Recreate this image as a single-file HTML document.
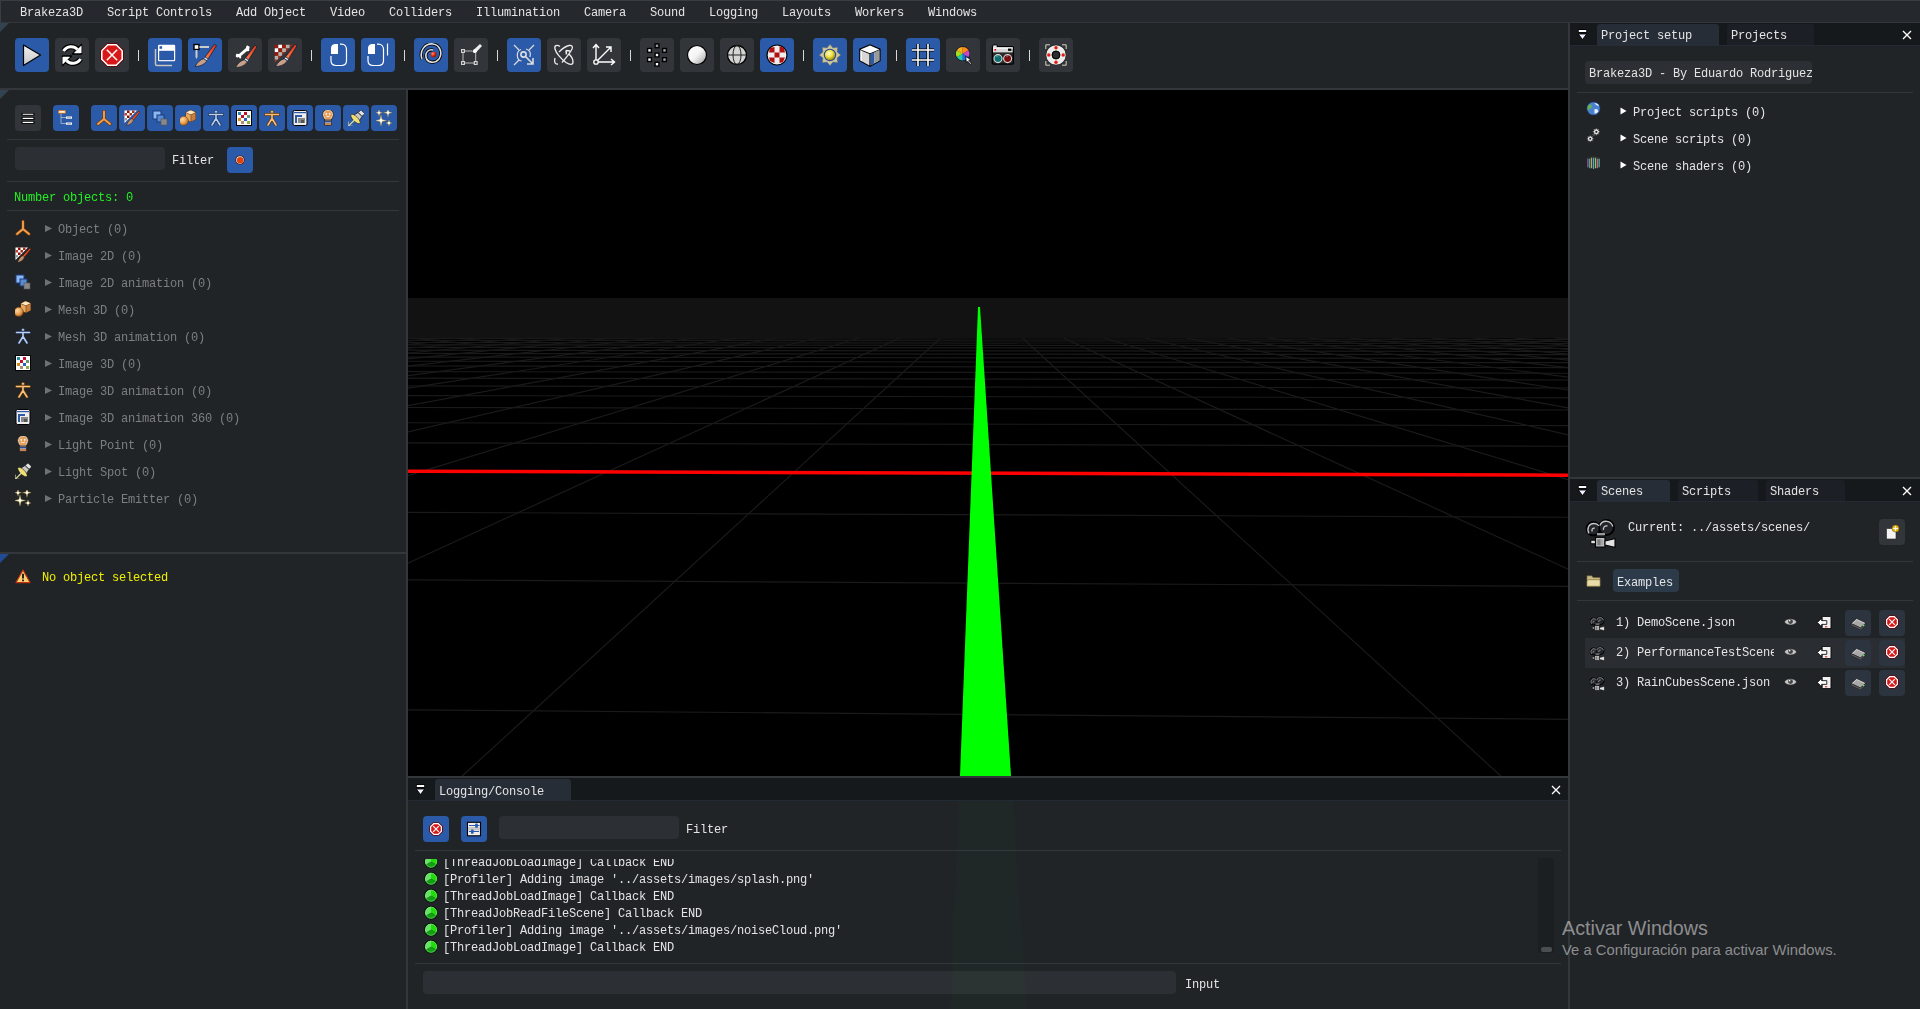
<!DOCTYPE html>
<html><head><meta charset="utf-8">
<style>
*{margin:0;padding:0;box-sizing:border-box}
html,body{width:1920px;height:1009px;overflow:hidden;background:#212427;font-family:"Liberation Mono",monospace;font-size:12px;letter-spacing:-0.2px;color:#e4e4e4}
.a{position:absolute}
.t{position:absolute;white-space:pre;line-height:14px;will-change:transform}
.btn{position:absolute;border-radius:4px}
</style></head><body>
<svg width="0" height="0" style="position:absolute"><defs>
<linearGradient id="gw" x1="0" y1="0" x2="1" y2="1"><stop offset="0" stop-color="#fff"/><stop offset="0.5" stop-color="#f4f4f4"/><stop offset="1" stop-color="#9a9a9a"/></linearGradient>
<linearGradient id="gpl" x1="0" y1="0" x2="0" y2="1"><stop offset="0" stop-color="#f0f0f0"/><stop offset="1" stop-color="#c8c8c8"/></linearGradient>
<radialGradient id="gsun" cx="0.4" cy="0.35" r="0.7"><stop offset="0" stop-color="#fffbd0"/><stop offset="0.5" stop-color="#f0e040"/><stop offset="1" stop-color="#8a7a10"/></radialGradient>
<radialGradient id="gred" cx="0.35" cy="0.35" r="0.7"><stop offset="0" stop-color="#ff9070"/><stop offset="0.6" stop-color="#e02000"/><stop offset="1" stop-color="#801000"/></radialGradient>
<radialGradient id="ggreen" cx="0.4" cy="0.35" r="0.7"><stop offset="0" stop-color="#a0ff80"/><stop offset="0.6" stop-color="#30c020"/><stop offset="1" stop-color="#107010"/></radialGradient>
<radialGradient id="gorange" cx="0.35" cy="0.35" r="0.7"><stop offset="0" stop-color="#ffd8a0"/><stop offset="0.6" stop-color="#e8a050"/><stop offset="1" stop-color="#a05a20"/></radialGradient>
<linearGradient id="gbrush" x1="0" y1="1" x2="1" y2="0"><stop offset="0" stop-color="#ff8050"/><stop offset="1" stop-color="#e03010"/></linearGradient>
</defs></svg>
<div class="a" style="left:0px;top:0px;width:1920px;height:22px;background:#25282c;"></div>
<div class="a" style="left:0px;top:0px;width:1920px;height:1px;background:#3a3d42;"></div>
<div class="a" style="left:0px;top:0px;width:1px;height:22px;background:#3a3d42;"></div>
<div class="a" style="left:0px;top:22px;width:1920px;height:1px;background:#33363a;"></div>
<div class="t" style="left:19.7px;top:6px;">Brakeza3D</div>
<div class="t" style="left:106.7px;top:6px;">Script Controls</div>
<div class="t" style="left:235.7px;top:6px;">Add Object</div>
<div class="t" style="left:329.7px;top:6px;">Video</div>
<div class="t" style="left:388.7px;top:6px;">Colliders</div>
<div class="t" style="left:475.7px;top:6px;">Illumination</div>
<div class="t" style="left:583.7px;top:6px;">Camera</div>
<div class="t" style="left:649.7px;top:6px;">Sound</div>
<div class="t" style="left:708.7px;top:6px;">Logging</div>
<div class="t" style="left:781.7px;top:6px;">Layouts</div>
<div class="t" style="left:854.7px;top:6px;">Workers</div>
<div class="t" style="left:927.7px;top:6px;">Windows</div>
<div class="a" style="left:0px;top:23px;width:1568px;height:65px;background:#212427;"></div>
<div class="a" style="left:0px;top:88px;width:1568px;height:2px;background:#33373b;"></div>
<svg class="a" style="left:0;top:23px" width="10" height="10"><path d="M0,0 L9,0 L0,9 Z" fill="#33424f"/></svg>
<div class="btn" style="left:15px;top:38px;width:34px;height:34px;background:#2a5aa8"></div>
<svg class="a" style="left:20px;top:43px" width="24" height="24" viewBox="0 0 24 24"><path d="M3.5,2 L20.5,12 L3.5,22.5 Z" fill="url(#gpl)" stroke="#000" stroke-width="1.2" stroke-linejoin="round"/></svg>
<div class="btn" style="left:55px;top:38px;width:34px;height:34px;background:#323539"></div>
<svg class="a" style="left:60px;top:43px" width="24" height="24" viewBox="0 0 24 24"><g fill="none" stroke="#000" stroke-width="5.2"><path d="M3.5,8 C7,2.5 14,2.5 17.5,6.5"/><path d="M20.5,16 C17,21.5 10,21.5 6.5,17.5"/></g><path d="M21.5,1.5 L21.5,11 L12.5,11 Z" fill="#fff" stroke="#000" stroke-width="1.4" stroke-linejoin="round"/><path d="M2.5,22.5 L2.5,13 L11.5,13 Z" fill="#fff" stroke="#000" stroke-width="1.4" stroke-linejoin="round"/><g fill="none" stroke="#fff" stroke-width="3"><path d="M3.5,8 C7,2.5 14,2.5 17.5,6.5"/><path d="M20.5,16 C17,21.5 10,21.5 6.5,17.5"/></g><path d="M21.5,2.5 L21.5,10 L14,10 Z" fill="#fff"/><path d="M2.5,21.5 L2.5,14 L10,14 Z" fill="#fff"/></svg>
<div class="btn" style="left:95px;top:38px;width:34px;height:34px;background:#323539"></div>
<svg class="a" style="left:100px;top:43px" width="24" height="24" viewBox="0 0 24 24"><polygon points="23.92,16.94 16.94,23.92 7.06,23.92 0.08,16.94 0.08,7.06 7.06,0.08 16.94,0.08 23.92,7.06" fill="#5a0a0a"/><polygon points="22.99,16.55 16.55,22.99 7.45,22.99 1.01,16.55 1.01,7.45 7.45,1.01 16.55,1.01 22.99,7.45" fill="#fff"/><polygon points="21.42,15.90 15.90,21.42 8.10,21.42 2.58,15.90 2.58,8.10 8.10,2.58 15.90,2.58 21.42,8.10" fill="#d81818"/><path d="M6.84,6.84 L17.16,17.16 M17.16,6.84 L6.84,17.16" stroke="#fff" stroke-width="1.5"/></svg>
<div class="btn" style="left:148px;top:38px;width:34px;height:34px;background:#2a5aa8"></div>
<svg class="a" style="left:153px;top:43px" width="24" height="24" viewBox="0 0 24 24"><path d="M2.5,6 L2.5,21 Q2.5,22.5 4,22.5 L19,22.5" fill="none" stroke="#c8c4b8" stroke-width="1.5"/><rect x="5" y="1.8" width="17.2" height="16.5" fill="#fff" rx="1.2"/><rect x="6.2" y="7.8" width="14.8" height="9.3" fill="#2a5aa8"/><rect x="6.5" y="3.2" width="2.6" height="2.6" fill="#2a5aa8"/></svg>
<div class="btn" style="left:188px;top:38px;width:34px;height:34px;background:#2a5aa8"></div>
<svg class="a" style="left:193px;top:43px" width="24" height="24" viewBox="0 0 24 24"><rect x="1" y="1.5" width="5" height="5" fill="#fff" stroke="#000" stroke-width="1.4"/><path d="M6.5,3 L16,3 L16,5 L6.5,5 Z" fill="#ccc"/><path d="M2.5,7 L4.5,7 L4.5,14 L3.5,16 L2.5,14 Z" fill="#ccc"/><g transform="translate(-0.5,0)"><path d="M24,2.7 L22,1.3 L12.5,14 L15.5,16 Z" fill="url(#gbrush)" stroke="#101830" stroke-width="0.7" stroke-linejoin="round"/><path d="M15.5,16 L12.5,14 L11.2,15.7 L14.4,17.9 Z" fill="#d8ecff" stroke="#101830" stroke-width="0.5"/><path d="M14.4,17.9 L11.2,15.7 C8,16.5 5,19 2.5,23.5 C6,23.5 11,22.5 14.4,17.9 Z" fill="#c8a088" stroke="#101830" stroke-width="0.7" stroke-linejoin="round"/></g></svg>
<div class="btn" style="left:228px;top:38px;width:34px;height:34px;background:#323539"></div>
<svg class="a" style="left:233px;top:43px" width="24" height="24" viewBox="0 0 24 24"><path d="M6,14 C4,15 2,14 3,12 C3,10 5,11 6,11 L13,5 C13,3 14,2 15,3 C17,3 17,5 16,6 C17,7 16,9 14,8 L8,13 C9,15 7,17 6,14 Z" fill="#fff"/><g transform="translate(0,1)"><path d="M24,2.7 L22,1.3 L12.5,14 L15.5,16 Z" fill="url(#gbrush)" stroke="#101830" stroke-width="0.7" stroke-linejoin="round"/><path d="M15.5,16 L12.5,14 L11.2,15.7 L14.4,17.9 Z" fill="#d8ecff" stroke="#101830" stroke-width="0.5"/><path d="M14.4,17.9 L11.2,15.7 C8,16.5 5,19 2.5,23.5 C6,23.5 11,22.5 14.4,17.9 Z" fill="#c8a088" stroke="#101830" stroke-width="0.7" stroke-linejoin="round"/></g></svg>
<div class="btn" style="left:268px;top:38px;width:34px;height:34px;background:#323539"></div>
<svg class="a" style="left:273px;top:43px" width="24" height="24" viewBox="0 0 24 24"><clipPath id="ckc"><path d="M1.5,1.5 L20,1.5 L1.5,20 Z"/></clipPath><g clip-path="url(#ckc)"><rect x="1.5" y="1.5" width="3.9" height="3.9" fill="#9a1a0a"/><rect x="5.3" y="1.5" width="3.9" height="3.9" fill="#ffffff"/><rect x="9.1" y="1.5" width="3.9" height="3.9" fill="#9a1a0a"/><rect x="12.9" y="1.5" width="3.9" height="3.9" fill="#b8b0a8"/><rect x="16.7" y="1.5" width="3.9" height="3.9" fill="#a03020"/><rect x="1.5" y="5.3" width="3.9" height="3.9" fill="#ffffff"/><rect x="5.3" y="5.3" width="3.9" height="3.9" fill="#9a1a0a"/><rect x="9.1" y="5.3" width="3.9" height="3.9" fill="#b8b0a8"/><rect x="12.9" y="5.3" width="3.9" height="3.9" fill="#a03020"/><rect x="16.7" y="5.3" width="3.9" height="3.9" fill="#b8b0a8"/><rect x="1.5" y="9.1" width="3.9" height="3.9" fill="#9a1a0a"/><rect x="5.3" y="9.1" width="3.9" height="3.9" fill="#b8b0a8"/><rect x="9.1" y="9.1" width="3.9" height="3.9" fill="#a03020"/><rect x="12.9" y="9.1" width="3.9" height="3.9" fill="#b8b0a8"/><rect x="16.7" y="9.1" width="3.9" height="3.9" fill="#a03020"/><rect x="1.5" y="12.9" width="3.9" height="3.9" fill="#b8b0a8"/><rect x="5.3" y="12.9" width="3.9" height="3.9" fill="#a03020"/><rect x="9.1" y="12.9" width="3.9" height="3.9" fill="#b8b0a8"/><rect x="12.9" y="12.9" width="3.9" height="3.9" fill="#a03020"/><rect x="16.7" y="12.9" width="3.9" height="3.9" fill="#b8b0a8"/><rect x="1.5" y="16.7" width="3.9" height="3.9" fill="#a03020"/><rect x="5.3" y="16.7" width="3.9" height="3.9" fill="#b8b0a8"/><rect x="9.1" y="16.7" width="3.9" height="3.9" fill="#a03020"/><rect x="12.9" y="16.7" width="3.9" height="3.9" fill="#b8b0a8"/><rect x="16.7" y="16.7" width="3.9" height="3.9" fill="#a03020"/></g><g transform="translate(0,0)"><path d="M24,2.7 L22,1.3 L12.5,14 L15.5,16 Z" fill="url(#gbrush)" stroke="#101830" stroke-width="0.7" stroke-linejoin="round"/><path d="M15.5,16 L12.5,14 L11.2,15.7 L14.4,17.9 Z" fill="#d8ecff" stroke="#101830" stroke-width="0.5"/><path d="M14.4,17.9 L11.2,15.7 C8,16.5 5,19 2.5,23.5 C6,23.5 11,22.5 14.4,17.9 Z" fill="#c8a088" stroke="#101830" stroke-width="0.7" stroke-linejoin="round"/></g></svg>
<div class="btn" style="left:321px;top:38px;width:34px;height:34px;background:#2a5aa8"></div>
<svg class="a" style="left:326px;top:43px" width="24" height="24" viewBox="0 0 24 24"><g transform="translate(0,0)"><path d="M14,1.2 L15.5,1.2 C18.5,1.2 20.5,3.5 20.5,6.5 L20.5,17.5 C20.5,20.5 18.5,22.5 15.5,22.5 L10,22.5 C7,22.5 5,20.5 5,17.5 L5,13" fill="none" stroke="#fff" stroke-width="1.2"/><path d="M5,11 L5,5 C5,2.5 7,1 9.5,1 L12,1 L12,11 Z" fill="#fff"/></g></svg>
<div class="btn" style="left:361px;top:38px;width:34px;height:34px;background:#2a5aa8"></div>
<svg class="a" style="left:366px;top:43px" width="24" height="24" viewBox="0 0 24 24"><g transform="translate(-3,0)"><path d="M14,1.2 L15.5,1.2 C18.5,1.2 20.5,3.5 20.5,6.5 L20.5,17.5 C20.5,20.5 18.5,22.5 15.5,22.5 L10,22.5 C7,22.5 5,20.5 5,17.5 L5,13" fill="none" stroke="#fff" stroke-width="1.2"/><path d="M5,11 L5,5 C5,2.5 7,1 9.5,1 L12,1 L12,11 Z" fill="#fff"/></g><path d="M21.5,0.5 L21.5,12.5" stroke="#fff" stroke-width="1.2"/></svg>
<div class="btn" style="left:414px;top:38px;width:34px;height:34px;background:#2a5aa8"></div>
<svg class="a" style="left:419px;top:43px" width="24" height="24" viewBox="0 0 24 24"><g fill="none" stroke="#000" stroke-width="3.2"><path d="M3,16 C0,8 6,0 14,1 C21,2 24,10 20,16 C16,21 8,20 7,14 C6,9 10,6 14,7"/></g><g fill="none" stroke="#ddd" stroke-width="1.6"><path d="M3,16 C0,8 6,0 14,1 C21,2 24,10 20,16 C16,21 8,20 7,14 C6,9 10,6 14,7"/></g><circle cx="14.6" cy="11.5" r="2.8" fill="url(#gred)"/></svg>
<div class="btn" style="left:454px;top:38px;width:34px;height:34px;background:#323539"></div>
<svg class="a" style="left:459px;top:43px" width="24" height="24" viewBox="0 0 24 24"><g fill="none" stroke="#ccc" stroke-width="0.9"><path d="M4,9.5 L4,18.5 M5.5,20 L15.2,20 M16.7,18.5 L16.7,10 M5.5,8 L13.5,8"/></g><g fill="none" stroke="#ddd" stroke-width="1.1"><rect x="2.6" y="6.6" width="2.8" height="2.8"/><rect x="2.6" y="18.6" width="2.8" height="2.8"/><rect x="15.3" y="18.6" width="2.8" height="2.8"/></g><path d="M14.5,7 L21,1 L23,3 L17,9.5 Z" fill="#eee"/><circle cx="15.8" cy="8.2" r="1.9" fill="#fff"/></svg>
<div class="btn" style="left:507px;top:38px;width:34px;height:34px;background:#2a5aa8"></div>
<svg class="a" style="left:512px;top:43px" width="24" height="24" viewBox="0 0 24 24"><g fill="none" stroke="#ddd" stroke-width="1.2"><path d="M2,2 L7,7 M22,2 L17,7 M2,22 L7,17"/><path d="M9.5,18 C4,17 4,8 9,6.5 M14,6 C18,7 19,10 18,14"/><circle cx="11.5" cy="11.5" r="2.6" stroke-width="1.6"/><path d="M13.5,13.5 L21,21 M21,15 L21,21 L15,21" stroke-width="1.6"/></g></svg>
<div class="btn" style="left:547px;top:38px;width:34px;height:34px;background:#323539"></div>
<svg class="a" style="left:552px;top:43px" width="24" height="24" viewBox="0 0 24 24"><g fill="none" stroke="#eee" stroke-width="1.3"><path d="M8,3.5 C5,1.5 2,2.5 3,6 C4,10 9,16 14,19.5 C18,22 21,22 21,19 C21,16 19,13 17,11"/><path d="M3,15 C2,19 3,21.5 6,21 M10,19.5 C14,15 18,10 20,6 C21,3.5 20,2 17,2.5 C14,3 10,6 7,9"/><path d="M14,7.5 L18,8 M14,7.5 L14.5,11.5" stroke-width="1.6"/></g></svg>
<div class="btn" style="left:587px;top:38px;width:34px;height:34px;background:#323539"></div>
<svg class="a" style="left:592px;top:43px" width="24" height="24" viewBox="0 0 24 24"><g fill="none" stroke="#fff" stroke-width="1.4"><path d="M4,19 L4,2 M1,5 L4,1.5 L7,5 M4,19 L22,19 M19,16 L22.5,19 L19,22 M4,19 L19,4 M14,4 L19,4 L19,9"/></g><circle cx="4" cy="19" r="2.2" fill="#333" stroke="#fff" stroke-width="1.3"/></svg>
<div class="btn" style="left:640px;top:38px;width:34px;height:34px;background:#323539"></div>
<svg class="a" style="left:645px;top:43px" width="24" height="24" viewBox="0 0 24 24"><g stroke="#000" stroke-width="1.4"><rect x="2.6" y="5.5" width="3.8" height="3.8" fill="#fff"/><rect x="2.6" y="14.7" width="3.8" height="3.8" fill="#fff"/><rect x="10.1" y="10.1" width="3.8" height="3.8" fill="#fff"/><rect x="10.1" y="19.3" width="3.8" height="3.8" fill="#fff"/><rect x="10.1" y="0.9" width="3.8" height="3.8" fill="#999"/><rect x="17.6" y="5.5" width="3.8" height="3.8" fill="#aaa"/><rect x="17.6" y="14.7" width="3.8" height="3.8" fill="#aaa"/></g></svg>
<div class="btn" style="left:680px;top:38px;width:34px;height:34px;background:#323539"></div>
<svg class="a" style="left:685px;top:43px" width="24" height="24" viewBox="0 0 24 24"><circle cx="12" cy="12" r="9.5" fill="url(#gw)" stroke="#000" stroke-width="1.2"/></svg>
<div class="btn" style="left:720px;top:38px;width:34px;height:34px;background:#323539"></div>
<svg class="a" style="left:725px;top:43px" width="24" height="24" viewBox="0 0 24 24"><circle cx="12" cy="12" r="9.5" fill="#d4d4d4" stroke="#000" stroke-width="1.3"/><g fill="none" stroke="#222" stroke-width="1"><ellipse cx="12" cy="12" rx="4" ry="9.5"/><path d="M2.5,12 L21.5,12"/></g></svg>
<div class="btn" style="left:760px;top:38px;width:34px;height:34px;background:#2a5aa8"></div>
<svg class="a" style="left:765px;top:43px" width="24" height="24" viewBox="0 0 24 24"><circle cx="12" cy="12" r="10" fill="#eee" stroke="#000" stroke-width="1.2"/><g fill="#b01010"><rect x="9.5" y="9.5" width="5" height="5"/><path d="M5,5 L9.5,4 L9.5,9.5 L4,9.5 Z"/><path d="M14.5,3 L19,5 L20,9.5 L14.5,9.5 Z"/><path d="M4,14.5 L9.5,14.5 L9.5,20 L5,18 Z"/><path d="M14.5,14.5 L20,14.5 L18,19 L14.5,20 Z"/></g></svg>
<div class="btn" style="left:813px;top:38px;width:34px;height:34px;background:#2a5aa8"></div>
<svg class="a" style="left:818px;top:43px" width="24" height="24" viewBox="0 0 24 24"><polygon points="12.00,1.40 14.91,4.98 19.50,4.50 19.02,9.09 22.60,12.00 19.02,14.91 19.50,19.50 14.91,19.02 12.00,22.60 9.09,19.02 4.50,19.50 4.98,14.91 1.40,12.00 4.98,9.09 4.50,4.50 9.09,4.98" fill="#cdc59c" stroke="#8a8260" stroke-width="0.4"/><circle cx="12" cy="12" r="6.2" fill="#1e4a90"/><circle cx="12" cy="12" r="5.2" fill="url(#gsun)"/></svg>
<div class="btn" style="left:853px;top:38px;width:34px;height:34px;background:#2a5aa8"></div>
<svg class="a" style="left:858px;top:43px" width="24" height="24" viewBox="0 0 24 24"><path d="M12,1.2 L22.6,5.8 L22.6,18 L12,24 L1.2,18 L1.2,5.8 Z" fill="#000"/><path d="M12,2.5 L21.3,6.4 L12,10.2 L2.5,6.4 Z" fill="#fff"/><path d="M2.4,7.2 L11.4,10.9 L11.4,22.4 L2.4,17.4 Z" fill="#d6d6d6"/><path d="M2.4,7.2 L4,7.9 L4,18.3 L2.4,17.4 Z" fill="#f4f4f4"/><path d="M12.6,10.9 L21.4,7.2 L21.4,17.4 L12.6,22.4 Z" fill="#c8c8c8"/><path d="M17,9.1 L21.4,7.2 L21.4,17.4 L17,19.9 Z" fill="#9a9a9a"/><path d="M12.6,10.9 L16.3,9.4 L16.3,20.3 L12.6,22.4 Z" fill="#2a5aa8"/></svg>
<div class="btn" style="left:906px;top:38px;width:34px;height:34px;background:#2a5aa8"></div>
<svg class="a" style="left:911px;top:43px" width="24" height="24" viewBox="0 0 24 24"><g stroke="#000" stroke-width="3.2"><path d="M7,1 L7,23 M17,1 L17,23 M1,7 L23,7 M1,17 L23,17"/></g><g stroke="#fff" stroke-width="1.6"><path d="M7,1 L7,23 M17,1 L17,23 M1,7 L23,7 M1,17 L23,17"/></g></svg>
<div class="btn" style="left:946px;top:38px;width:34px;height:34px;background:#323539"></div>
<svg class="a" style="left:951px;top:43px" width="24" height="24" viewBox="0 0 24 24"><circle cx="11.7" cy="10.7" r="7.4" fill="#111"/><path d="M11.7,10.7 L11.70,3.90 A6.8,6.8 0 0 1 17.59,7.30 Z" fill="#ff8a1a"/><path d="M11.7,10.7 L17.59,7.30 A6.8,6.8 0 0 1 17.59,14.10 Z" fill="#c848c8"/><path d="M11.7,10.7 L17.59,14.10 A6.8,6.8 0 0 1 11.70,17.50 Z" fill="#2a6af0"/><path d="M11.7,10.7 L11.70,17.50 A6.8,6.8 0 0 1 5.81,14.10 Z" fill="#20c8b0"/><path d="M11.7,10.7 L5.81,14.10 A6.8,6.8 0 0 1 5.81,7.30 Z" fill="#a0e020"/><path d="M11.7,10.7 L5.81,7.30 A6.8,6.8 0 0 1 11.70,3.90 Z" fill="#f8b020"/><path d="M14.5,13.5 L20,16.5 L17.8,17.3 L20.5,20.5 L19.5,21.3 L16.8,18.3 L15.5,20 Z" fill="#fff" stroke="#000" stroke-width="0.8"/></svg>
<div class="btn" style="left:986px;top:38px;width:34px;height:34px;background:#323539"></div>
<svg class="a" style="left:991px;top:43px" width="24" height="24" viewBox="0 0 24 24"><rect x="0.7" y="3" width="22.3" height="18.7" rx="1.8" fill="#000"/><rect x="1.5" y="1.6" width="5" height="3" rx="0.8" fill="#000"/><rect x="2.2" y="2.4" width="3.5" height="2" fill="#e8e8e8"/><rect x="2" y="4.3" width="19.7" height="5.2" fill="#d8d8d8"/><rect x="2" y="4.3" width="19.7" height="1.6" fill="#f4f4f4"/><rect x="3.5" y="6" width="1.6" height="1.6" fill="#e00"/><rect x="17" y="5.6" width="3.4" height="2.2" fill="#000"/><rect x="2" y="10" width="19.7" height="10.5" fill="#2a2a2a"/><circle cx="7" cy="15.6" r="4" fill="#0c6c70" stroke="#d8d8d8" stroke-width="1.1"/><circle cx="16.6" cy="15.6" r="4" fill="#7a0c10" stroke="#d8d8d8" stroke-width="1.1"/><path d="M5,14 L7.5,13 M15,14 L17,13" stroke="#8ef" stroke-width="0.6" opacity="0.6"/></svg>
<div class="btn" style="left:1039px;top:38px;width:34px;height:34px;background:#323539"></div>
<svg class="a" style="left:1044px;top:43px" width="24" height="24" viewBox="0 0 24 24"><g fill="none" stroke="#d8d0c0" stroke-width="1"><path d="M1.8,6 L1.8,1.8 L6,1.8 M18,1.8 L22.2,1.8 L22.2,6 M22.2,18 L22.2,22.2 L18,22.2 M6,22.2 L1.8,22.2 L1.8,18"/></g><circle cx="12" cy="12" r="10.2" fill="#000"/><circle cx="12" cy="12" r="7" fill="none" stroke="#ececec" stroke-width="5.6"/><circle cx="12" cy="12" r="3.9" fill="#2a2d31" stroke="#000" stroke-width="1"/><g fill="#e81818"><circle cx="12" cy="4.8" r="1.7"/><circle cx="12" cy="19.2" r="1.7"/><circle cx="4.8" cy="12" r="1.7"/><circle cx="19.2" cy="12" r="1.7"/></g></svg>
<div class="a" style="left:138px;top:50px;width:1px;height:11px;background:#d8d8d8;"></div>
<div class="a" style="left:311px;top:50px;width:1px;height:11px;background:#d8d8d8;"></div>
<div class="a" style="left:404px;top:50px;width:1px;height:11px;background:#d8d8d8;"></div>
<div class="a" style="left:497px;top:50px;width:1px;height:11px;background:#d8d8d8;"></div>
<div class="a" style="left:630px;top:50px;width:1px;height:11px;background:#d8d8d8;"></div>
<div class="a" style="left:803px;top:50px;width:1px;height:11px;background:#d8d8d8;"></div>
<div class="a" style="left:896px;top:50px;width:1px;height:11px;background:#d8d8d8;"></div>
<div class="a" style="left:1029px;top:50px;width:1px;height:11px;background:#d8d8d8;"></div>
<div class="a" style="left:406px;top:90px;width:2px;height:919px;background:#33373b;"></div>
<svg class="a" style="left:0;top:90px" width="10" height="10"><path d="M0,0 L9,0 L0,9 Z" fill="#33424f"/></svg>
<div class="btn" style="left:15px;top:105px;width:26px;height:26px;background:#323539"></div>
<svg class="a" style="left:20px;top:110px" width="16" height="16" viewBox="0 0 16 16"><g stroke="#000" stroke-width="2.6" stroke-linecap="round"><path d="M2.5,4.3 L13.5,4.3 M2.5,8.4 L13.5,8.4 M2.5,12.4 L13.5,12.4"/></g><g stroke="#fff" stroke-width="1.1"><path d="M2.6,4.3 L13.4,4.3 M2.6,8.4 L13.4,8.4 M2.6,12.4 L13.4,12.4"/></g></svg>
<div class="btn" style="left:53px;top:105px;width:26px;height:26px;background:#2a5aa8"></div>
<svg class="a" style="left:58px;top:110px" width="16" height="16" viewBox="0 0 16 16"><g stroke="#ccc" stroke-width="0.7" fill="none"><path d="M3,3.3 L3,13.5 L8,13.5 M3,7.5 L8,7.5"/></g><rect x="0.3" y="0.3" width="7.3" height="3" fill="#f8d090" stroke="#c06010" stroke-width="0.6"/><rect x="1.5" y="1.3" width="5" height="1" fill="#fff"/><rect x="8" y="6.5" width="6" height="2.2" fill="#fff"/><rect x="8" y="12.5" width="6" height="2.2" fill="#fff"/><path d="M9,7.6 L13,7.6 M9,13.6 L13,13.6" stroke="#667" stroke-width="0.5"/></svg>
<div class="btn" style="left:91px;top:105px;width:26px;height:26px;background:#2a5aa8"></div>
<svg class="a" style="left:96px;top:110px" width="16" height="16" viewBox="0 0 16 16"><g stroke="#7a3a00" stroke-width="3.2" stroke-linecap="round" fill="none"><path d="M8,1.5 L8,9 L2,14 M8,9 L14,14"/></g><g stroke="#f0a050" stroke-width="1.9" stroke-linecap="round" fill="none"><path d="M8,1.5 L8,9 L2,14 M8,9 L14,14"/></g></svg>
<div class="btn" style="left:119px;top:105px;width:26px;height:26px;background:#2a5aa8"></div>
<svg class="a" style="left:124px;top:110px" width="16" height="16" viewBox="0 0 16 16"><path d="M0.5,0.5 L13,0.5 L0.5,13 Z" fill="#fff"/><rect x="3" y="0.5" width="2.5" height="2.5" fill="#901000"/><rect x="8" y="0.5" width="2.5" height="2.5" fill="#a03020"/><rect x="0.5" y="3" width="2.5" height="2.5" fill="#c04030"/><rect x="5.5" y="3" width="2.5" height="2.5" fill="#a03020"/><rect x="3" y="5.5" width="2.5" height="2.5" fill="#901000"/><rect x="0.5" y="8" width="2.5" height="2.5" fill="#999"/><path d="M15,1 L16,2 L9.5,10 L8,8.5 Z" fill="#f05020" stroke="#300" stroke-width="0.4"/><path d="M8,8.5 L9.5,10 C8.5,13 6,15 2.5,15.5 C3.5,13 5,9.5 8,8.5 Z" fill="#c09070" stroke="#201000" stroke-width="0.4"/></svg>
<div class="btn" style="left:147px;top:105px;width:26px;height:26px;background:#2a5aa8"></div>
<svg class="a" style="left:152px;top:110px" width="16" height="16" viewBox="0 0 16 16"><rect x="1" y="1" width="8" height="8" fill="#8ab8f0" stroke="#1a3a80" stroke-width="1"/><rect x="5" y="5" width="7" height="7" fill="#5a8ad0" stroke="#1a3a80" stroke-width="1"/><rect x="9" y="9" width="6" height="6" fill="#888" stroke="#555" stroke-width="0.6"/></svg>
<div class="btn" style="left:175px;top:105px;width:26px;height:26px;background:#2a5aa8"></div>
<svg class="a" style="left:180px;top:110px" width="16" height="16" viewBox="0 0 16 16"><path d="M5.5,2.5 L10.5,-0.3 L16,2 L16,9.5 L11,12 L5.5,10 Z" fill="#6a3a10"/><path d="M6,2.6 L10.5,0.3 L15.5,2.3 L11,4.6 Z" fill="#ffe8c0"/><path d="M6,3 L10.7,5 L10.7,11.5 L6,9.6 Z" fill="#e8a860"/><path d="M11.3,5 L15.5,2.8 L15.5,9.3 L11.3,11.5 Z" fill="#c88040"/><circle cx="3.8" cy="10.9" r="4.6" fill="url(#gorange)" stroke="#6a3a10" stroke-width="0.5"/></svg>
<div class="btn" style="left:203px;top:105px;width:26px;height:26px;background:#2a5aa8"></div>
<svg class="a" style="left:208px;top:110px" width="16" height="16" viewBox="0 0 16 16"><g stroke="#1a2a50" stroke-width="3" stroke-linecap="round" fill="none"><path d="M1.5,4.5 L14.5,4.5 M8,4.5 L8,8.5 L4,15 M8,8.5 L12,15"/></g><circle cx="8" cy="1.8" r="1.5" fill="#b8d0f0" stroke="#1a2a50" stroke-width="0.6"/><g stroke="#b8d0f0" stroke-width="1.6" stroke-linecap="round" fill="none"><path d="M1.5,4.5 L14.5,4.5 M8,4.5 L8,8.5 L4,15 M8,8.5 L12,15"/></g></svg>
<div class="btn" style="left:231px;top:105px;width:26px;height:26px;background:#2a5aa8"></div>
<svg class="a" style="left:236px;top:110px" width="16" height="16" viewBox="0 0 16 16"><rect x="0.5" y="0.5" width="15" height="15" fill="#fff" stroke="#000" stroke-width="1"/><rect x="2" y="2" width="3" height="3" fill="#2a8aa8"/><rect x="8" y="2" width="3" height="3" fill="#c01030"/><rect x="5" y="5" width="3" height="3" fill="#c01030"/><rect x="11" y="5" width="3" height="3" fill="#6a9a6a"/><rect x="2" y="8" width="3" height="3" fill="#d88a20"/><rect x="8" y="8" width="3" height="3" fill="#2a60c0"/><rect x="5" y="11" width="3" height="3" fill="#b09070"/><rect x="11" y="11" width="3" height="3" fill="#8ab040"/></svg>
<div class="btn" style="left:259px;top:105px;width:26px;height:26px;background:#2a5aa8"></div>
<svg class="a" style="left:264px;top:110px" width="16" height="16" viewBox="0 0 16 16"><g stroke="#5a3000" stroke-width="3" stroke-linecap="round" fill="none"><path d="M1.5,4.5 L14.5,4.5 M8,4.5 L8,8.5 L4,15 M8,8.5 L12,15"/></g><circle cx="8" cy="1.8" r="1.5" fill="#f8c080" stroke="#5a3000" stroke-width="0.6"/><g stroke="#f8c080" stroke-width="1.6" stroke-linecap="round" fill="none"><path d="M1.5,4.5 L14.5,4.5 M8,4.5 L8,8.5 L4,15 M8,8.5 L12,15"/></g></svg>
<div class="btn" style="left:287px;top:105px;width:26px;height:26px;background:#2a5aa8"></div>
<svg class="a" style="left:292px;top:110px" width="16" height="16" viewBox="0 0 16 16"><rect x="1" y="0.5" width="14" height="15" rx="1.5" fill="#eee" stroke="#000" stroke-width="1"/><rect x="2" y="2" width="12" height="1.2" fill="#2a5aa8"/><path d="M3,5 L10,5 L10,7 L5,7 L5,13 L3,13 Z" fill="#2a5aa8"/><rect x="6" y="8" width="7" height="5" fill="#888"/><rect x="9" y="10" width="3" height="3" fill="#555"/></svg>
<div class="btn" style="left:315px;top:105px;width:26px;height:26px;background:#2a5aa8"></div>
<svg class="a" style="left:320px;top:110px" width="16" height="16" viewBox="0 0 16 16"><path d="M8,-0.6 C4.6,-0.6 2.6,1.8 2.6,4.6 C2.6,7 4.2,8.2 4.8,10 L11.2,10 C11.8,8.2 13.4,7 13.4,4.6 C13.4,1.8 11.4,-0.6 8,-0.6 Z" fill="#e8dccc" stroke="#3a2410" stroke-width="0.9"/><path d="M8,0.6 C5.5,0.6 4,2.5 4,4.6 C4,6.5 5.2,7.6 5.8,9.2 L10.2,9.2 C10.8,7.6 12,6.5 12,4.6 C12,2.5 10.5,0.6 8,0.6 Z" fill="#e89040" opacity="0.85"/><circle cx="6.3" cy="3.8" r="0.9" fill="#fff"/><circle cx="9.7" cy="3.8" r="0.9" fill="#fff"/><path d="M6,5.8 C7,7 9,7 10,5.8" fill="none" stroke="#fff" stroke-width="0.8"/><rect x="4.6" y="10.2" width="6.8" height="5" fill="#d8d8e0" stroke="#2a1a10" stroke-width="0.7"/><rect x="5" y="11" width="6" height="1.4" fill="#2a4a90"/><rect x="5" y="13.2" width="6" height="1.4" fill="#c06a20"/><path d="M6.5,15.4 L9.5,15.4 L8,16.6 Z" fill="#3a2410"/></svg>
<div class="btn" style="left:343px;top:105px;width:26px;height:26px;background:#2a5aa8"></div>
<svg class="a" style="left:348px;top:110px" width="16" height="16" viewBox="0 0 16 16"><path d="M10,2.5 L13,-0.2 L16.8,3.6 L14,6.5 Z" fill="#e0e0e0" stroke="#111" stroke-width="0.8" stroke-linejoin="round"/><path d="M4.5,6 L10,2.5 L14,6.5 L10.5,12 Z" fill="#c8c8c8" stroke="#111" stroke-width="0.7"/><ellipse cx="7.5" cy="9" rx="6.2" ry="2.4" transform="rotate(45 7.5 9)" fill="#f0e070" stroke="#222" stroke-width="0.6"/><path d="M7.5,9 L0.5,16" stroke="#e8e0a0" stroke-width="1.1"/><path d="M0,11.5 L0,16.3 L4.8,16.3" fill="none" stroke="#e8e0a0" stroke-width="1.1"/></svg>
<div class="btn" style="left:371px;top:105px;width:26px;height:26px;background:#2a5aa8"></div>
<svg class="a" style="left:376px;top:110px" width="16" height="16" viewBox="0 0 16 16"><path d="M3,-0.8999999999999999 L3.8,1.9000000000000001 L6.6,2.7 L3.8,3.5 L3,6.300000000000001 L2.2,3.5 L-0.6000000000000001,2.7 L2.2,1.9000000000000001 Z" fill="#f8f0c0" stroke="#8a7030" stroke-width="0.35"/><circle cx="3" cy="2.7" r="1.04" fill="#fff"/><path d="M12,-1.8999999999999995 L12.9,1.8000000000000003 L16.6,2.7 L12.9,3.6 L12,7.3 L11.1,3.6 L7.4,2.7 L11.1,1.8000000000000003 Z" fill="#f8f0c0" stroke="#8a7030" stroke-width="0.35"/><circle cx="12" cy="2.7" r="1.17" fill="#fff"/><path d="M5,4.7 L6.1,9.4 L10.8,10.5 L6.1,11.6 L5,16.3 L3.9,11.6 L-0.7999999999999998,10.5 L3.9,9.4 Z" fill="#f8f0c0" stroke="#8a7030" stroke-width="0.35"/><circle cx="5" cy="10.5" r="1.43" fill="#fff"/><path d="M13,9.8 L13.8,12.2 L16.2,13 L13.8,13.8 L13,16.2 L12.2,13.8 L9.8,13 L12.2,12.2 Z" fill="#f8f0c0" stroke="#8a7030" stroke-width="0.35"/><circle cx="13" cy="13" r="1.04" fill="#fff"/></svg>
<div class="a" style="left:7px;top:139px;width:392px;height:1px;background:#33363b;"></div>
<div class="btn" style="left:15px;top:147px;width:150px;height:23px;background:#2c2f33"></div>
<div class="t" style="left:172.2px;top:154px;">Filter</div>
<div class="btn" style="left:227px;top:147px;width:26px;height:26px;background:#2a5aa8"></div>
<svg class="a" style="left:232px;top:152px" width="16" height="16" viewBox="0 0 16 16"><circle cx="8" cy="8" r="4.6" fill="#4a1200"/><circle cx="8" cy="8" r="3.8" fill="#fff"/><circle cx="8.2" cy="8.2" r="3.3" fill="#e0400e"/></svg>
<div class="a" style="left:7px;top:181px;width:392px;height:1px;background:#33363b;"></div>
<div class="t" style="left:14.2px;top:191px;color:#22f022;">Number objects: 0</div>
<div class="a" style="left:7px;top:210px;width:392px;height:1px;background:#33363b;"></div>
<svg class="a" style="left:15px;top:220px" width="16" height="16" viewBox="0 0 16 16"><g stroke="#7a3a00" stroke-width="3.2" stroke-linecap="round" fill="none"><path d="M8,1.5 L8,9 L2,14 M8,9 L14,14"/></g><g stroke="#f0a050" stroke-width="1.9" stroke-linecap="round" fill="none"><path d="M8,1.5 L8,9 L2,14 M8,9 L14,14"/></g></svg>
<svg class="a" style="left:45px;top:225px" width="8" height="8"><path d="M0,0 L7,3.5 L0,7 Z" fill="#6f7275"/></svg>
<div class="t" style="left:58.2px;top:223px;color:#7c7f82;">Object (0)</div>
<svg class="a" style="left:15px;top:247px" width="16" height="16" viewBox="0 0 16 16"><path d="M0.5,0.5 L13,0.5 L0.5,13 Z" fill="#fff"/><rect x="3" y="0.5" width="2.5" height="2.5" fill="#901000"/><rect x="8" y="0.5" width="2.5" height="2.5" fill="#a03020"/><rect x="0.5" y="3" width="2.5" height="2.5" fill="#c04030"/><rect x="5.5" y="3" width="2.5" height="2.5" fill="#a03020"/><rect x="3" y="5.5" width="2.5" height="2.5" fill="#901000"/><rect x="0.5" y="8" width="2.5" height="2.5" fill="#999"/><path d="M15,1 L16,2 L9.5,10 L8,8.5 Z" fill="#f05020" stroke="#300" stroke-width="0.4"/><path d="M8,8.5 L9.5,10 C8.5,13 6,15 2.5,15.5 C3.5,13 5,9.5 8,8.5 Z" fill="#c09070" stroke="#201000" stroke-width="0.4"/></svg>
<svg class="a" style="left:45px;top:252px" width="8" height="8"><path d="M0,0 L7,3.5 L0,7 Z" fill="#6f7275"/></svg>
<div class="t" style="left:58.2px;top:250px;color:#7c7f82;">Image 2D (0)</div>
<svg class="a" style="left:15px;top:274px" width="16" height="16" viewBox="0 0 16 16"><rect x="1" y="1" width="8" height="8" fill="#8ab8f0" stroke="#1a3a80" stroke-width="1"/><rect x="5" y="5" width="7" height="7" fill="#5a8ad0" stroke="#1a3a80" stroke-width="1"/><rect x="9" y="9" width="6" height="6" fill="#888" stroke="#555" stroke-width="0.6"/></svg>
<svg class="a" style="left:45px;top:279px" width="8" height="8"><path d="M0,0 L7,3.5 L0,7 Z" fill="#6f7275"/></svg>
<div class="t" style="left:58.2px;top:277px;color:#7c7f82;">Image 2D animation (0)</div>
<svg class="a" style="left:15px;top:301px" width="16" height="16" viewBox="0 0 16 16"><path d="M5.5,2.5 L10.5,-0.3 L16,2 L16,9.5 L11,12 L5.5,10 Z" fill="#6a3a10"/><path d="M6,2.6 L10.5,0.3 L15.5,2.3 L11,4.6 Z" fill="#ffe8c0"/><path d="M6,3 L10.7,5 L10.7,11.5 L6,9.6 Z" fill="#e8a860"/><path d="M11.3,5 L15.5,2.8 L15.5,9.3 L11.3,11.5 Z" fill="#c88040"/><circle cx="3.8" cy="10.9" r="4.6" fill="url(#gorange)" stroke="#6a3a10" stroke-width="0.5"/></svg>
<svg class="a" style="left:45px;top:306px" width="8" height="8"><path d="M0,0 L7,3.5 L0,7 Z" fill="#6f7275"/></svg>
<div class="t" style="left:58.2px;top:304px;color:#7c7f82;">Mesh 3D (0)</div>
<svg class="a" style="left:15px;top:328px" width="16" height="16" viewBox="0 0 16 16"><g stroke="#1a2a50" stroke-width="3" stroke-linecap="round" fill="none"><path d="M1.5,4.5 L14.5,4.5 M8,4.5 L8,8.5 L4,15 M8,8.5 L12,15"/></g><circle cx="8" cy="1.8" r="1.5" fill="#b8d0f0" stroke="#1a2a50" stroke-width="0.6"/><g stroke="#b8d0f0" stroke-width="1.6" stroke-linecap="round" fill="none"><path d="M1.5,4.5 L14.5,4.5 M8,4.5 L8,8.5 L4,15 M8,8.5 L12,15"/></g></svg>
<svg class="a" style="left:45px;top:333px" width="8" height="8"><path d="M0,0 L7,3.5 L0,7 Z" fill="#6f7275"/></svg>
<div class="t" style="left:58.2px;top:331px;color:#7c7f82;">Mesh 3D animation (0)</div>
<svg class="a" style="left:15px;top:355px" width="16" height="16" viewBox="0 0 16 16"><rect x="0.5" y="0.5" width="15" height="15" fill="#fff" stroke="#000" stroke-width="1"/><rect x="2" y="2" width="3" height="3" fill="#2a8aa8"/><rect x="8" y="2" width="3" height="3" fill="#c01030"/><rect x="5" y="5" width="3" height="3" fill="#c01030"/><rect x="11" y="5" width="3" height="3" fill="#6a9a6a"/><rect x="2" y="8" width="3" height="3" fill="#d88a20"/><rect x="8" y="8" width="3" height="3" fill="#2a60c0"/><rect x="5" y="11" width="3" height="3" fill="#b09070"/><rect x="11" y="11" width="3" height="3" fill="#8ab040"/></svg>
<svg class="a" style="left:45px;top:360px" width="8" height="8"><path d="M0,0 L7,3.5 L0,7 Z" fill="#6f7275"/></svg>
<div class="t" style="left:58.2px;top:358px;color:#7c7f82;">Image 3D (0)</div>
<svg class="a" style="left:15px;top:382px" width="16" height="16" viewBox="0 0 16 16"><g stroke="#5a3000" stroke-width="3" stroke-linecap="round" fill="none"><path d="M1.5,4.5 L14.5,4.5 M8,4.5 L8,8.5 L4,15 M8,8.5 L12,15"/></g><circle cx="8" cy="1.8" r="1.5" fill="#f8c080" stroke="#5a3000" stroke-width="0.6"/><g stroke="#f8c080" stroke-width="1.6" stroke-linecap="round" fill="none"><path d="M1.5,4.5 L14.5,4.5 M8,4.5 L8,8.5 L4,15 M8,8.5 L12,15"/></g></svg>
<svg class="a" style="left:45px;top:387px" width="8" height="8"><path d="M0,0 L7,3.5 L0,7 Z" fill="#6f7275"/></svg>
<div class="t" style="left:58.2px;top:385px;color:#7c7f82;">Image 3D animation (0)</div>
<svg class="a" style="left:15px;top:409px" width="16" height="16" viewBox="0 0 16 16"><rect x="1" y="0.5" width="14" height="15" rx="1.5" fill="#eee" stroke="#000" stroke-width="1"/><rect x="2" y="2" width="12" height="1.2" fill="#2a5aa8"/><path d="M3,5 L10,5 L10,7 L5,7 L5,13 L3,13 Z" fill="#2a5aa8"/><rect x="6" y="8" width="7" height="5" fill="#888"/><rect x="9" y="10" width="3" height="3" fill="#555"/></svg>
<svg class="a" style="left:45px;top:414px" width="8" height="8"><path d="M0,0 L7,3.5 L0,7 Z" fill="#6f7275"/></svg>
<div class="t" style="left:58.2px;top:412px;color:#7c7f82;">Image 3D animation 360 (0)</div>
<svg class="a" style="left:15px;top:436px" width="16" height="16" viewBox="0 0 16 16"><path d="M8,-0.6 C4.6,-0.6 2.6,1.8 2.6,4.6 C2.6,7 4.2,8.2 4.8,10 L11.2,10 C11.8,8.2 13.4,7 13.4,4.6 C13.4,1.8 11.4,-0.6 8,-0.6 Z" fill="#e8dccc" stroke="#3a2410" stroke-width="0.9"/><path d="M8,0.6 C5.5,0.6 4,2.5 4,4.6 C4,6.5 5.2,7.6 5.8,9.2 L10.2,9.2 C10.8,7.6 12,6.5 12,4.6 C12,2.5 10.5,0.6 8,0.6 Z" fill="#e89040" opacity="0.85"/><circle cx="6.3" cy="3.8" r="0.9" fill="#fff"/><circle cx="9.7" cy="3.8" r="0.9" fill="#fff"/><path d="M6,5.8 C7,7 9,7 10,5.8" fill="none" stroke="#fff" stroke-width="0.8"/><rect x="4.6" y="10.2" width="6.8" height="5" fill="#d8d8e0" stroke="#2a1a10" stroke-width="0.7"/><rect x="5" y="11" width="6" height="1.4" fill="#2a4a90"/><rect x="5" y="13.2" width="6" height="1.4" fill="#c06a20"/><path d="M6.5,15.4 L9.5,15.4 L8,16.6 Z" fill="#3a2410"/></svg>
<svg class="a" style="left:45px;top:441px" width="8" height="8"><path d="M0,0 L7,3.5 L0,7 Z" fill="#6f7275"/></svg>
<div class="t" style="left:58.2px;top:439px;color:#7c7f82;">Light Point (0)</div>
<svg class="a" style="left:15px;top:463px" width="16" height="16" viewBox="0 0 16 16"><path d="M10,2.5 L13,-0.2 L16.8,3.6 L14,6.5 Z" fill="#e0e0e0" stroke="#111" stroke-width="0.8" stroke-linejoin="round"/><path d="M4.5,6 L10,2.5 L14,6.5 L10.5,12 Z" fill="#c8c8c8" stroke="#111" stroke-width="0.7"/><ellipse cx="7.5" cy="9" rx="6.2" ry="2.4" transform="rotate(45 7.5 9)" fill="#f0e070" stroke="#222" stroke-width="0.6"/><path d="M7.5,9 L0.5,16" stroke="#e8e0a0" stroke-width="1.1"/><path d="M0,11.5 L0,16.3 L4.8,16.3" fill="none" stroke="#e8e0a0" stroke-width="1.1"/></svg>
<svg class="a" style="left:45px;top:468px" width="8" height="8"><path d="M0,0 L7,3.5 L0,7 Z" fill="#6f7275"/></svg>
<div class="t" style="left:58.2px;top:466px;color:#7c7f82;">Light Spot (0)</div>
<svg class="a" style="left:15px;top:490px" width="16" height="16" viewBox="0 0 16 16"><path d="M3,-0.8999999999999999 L3.8,1.9000000000000001 L6.6,2.7 L3.8,3.5 L3,6.300000000000001 L2.2,3.5 L-0.6000000000000001,2.7 L2.2,1.9000000000000001 Z" fill="#f8f0c0" stroke="#8a7030" stroke-width="0.35"/><circle cx="3" cy="2.7" r="1.04" fill="#fff"/><path d="M12,-1.8999999999999995 L12.9,1.8000000000000003 L16.6,2.7 L12.9,3.6 L12,7.3 L11.1,3.6 L7.4,2.7 L11.1,1.8000000000000003 Z" fill="#f8f0c0" stroke="#8a7030" stroke-width="0.35"/><circle cx="12" cy="2.7" r="1.17" fill="#fff"/><path d="M5,4.7 L6.1,9.4 L10.8,10.5 L6.1,11.6 L5,16.3 L3.9,11.6 L-0.7999999999999998,10.5 L3.9,9.4 Z" fill="#f8f0c0" stroke="#8a7030" stroke-width="0.35"/><circle cx="5" cy="10.5" r="1.43" fill="#fff"/><path d="M13,9.8 L13.8,12.2 L16.2,13 L13.8,13.8 L13,16.2 L12.2,13.8 L9.8,13 L12.2,12.2 Z" fill="#f8f0c0" stroke="#8a7030" stroke-width="0.35"/><circle cx="13" cy="13" r="1.04" fill="#fff"/></svg>
<svg class="a" style="left:45px;top:495px" width="8" height="8"><path d="M0,0 L7,3.5 L0,7 Z" fill="#6f7275"/></svg>
<div class="t" style="left:58.2px;top:493px;color:#7c7f82;">Particle Emitter (0)</div>
<div class="a" style="left:0px;top:552px;width:406px;height:2px;background:#33373b;"></div>
<svg class="a" style="left:0;top:554px" width="10" height="10"><path d="M0,0 L9,0 L0,9 Z" fill="#214b95"/></svg>
<svg class="a" style="left:15px;top:569px" width="16" height="15" viewBox="0 0 16 16"><path d="M8,1 L15.5,14.5 L0.5,14.5 Z" fill="#f8d070" stroke="#c03010" stroke-width="1.2" stroke-linejoin="round"/><path d="M8,5 L8,10" stroke="#000" stroke-width="1.8"/><rect x="7.1" y="11.3" width="1.8" height="1.8" fill="#000"/></svg>
<div class="t" style="left:42.2px;top:571px;color:#f0f000;">No object selected</div>
<div class="a" style="left:408px;top:90px;width:1160px;height:686px;background:#000;overflow:hidden">
<svg width="1160" height="686" style="position:absolute;left:0;top:0">
<rect x="0" y="208" width="1160" height="40" fill="#121212"/>
<g stroke="#1a1a1a" stroke-width="1.2" fill="none"><line x1="0" y1="619.82" x2="1160" y2="629.29"/>
<line x1="0" y1="489.90" x2="1160" y2="496.38"/>
<line x1="0" y1="422.32" x2="1160" y2="427.25"/>
<line x1="0" y1="352.91" x2="1160" y2="356.24"/>
<line x1="0" y1="332.73" x2="1160" y2="335.59"/>
<line x1="0" y1="317.49" x2="1160" y2="320.00"/>
<line x1="0" y1="305.57" x2="1160" y2="307.81"/>
<line x1="0" y1="296.00" x2="1160" y2="298.02"/>
<line x1="0" y1="288.14" x2="1160" y2="289.98"/>
<line x1="0" y1="281.58" x2="1160" y2="283.27"/>
<line x1="0" y1="276.01" x2="1160" y2="277.57"/>
<line x1="0" y1="271.23" x2="1160" y2="272.68"/>
<line x1="0" y1="267.07" x2="1160" y2="268.43"/>
<line x1="0" y1="263.44" x2="1160" y2="264.71"/>
<line x1="0" y1="260.22" x2="1160" y2="261.42"/>
<line x1="0" y1="257.36" x2="1160" y2="258.49"/>
<line x1="0" y1="254.80" x2="1160" y2="255.87"/>
<line x1="0" y1="252.49" x2="1160" y2="253.51"/>
<line x1="0" y1="250.40" x2="1160" y2="251.37"/>
<line x1="0" y1="248.50" x2="1160" y2="249.43"/>
<line x1="-1064.50" y1="248.00" x2="-20196.34" y2="686.00"/>
<line x1="-1023.55" y1="248.00" x2="-19677.09" y2="686.00"/>
<line x1="-982.60" y1="248.00" x2="-19157.85" y2="686.00"/>
<line x1="-941.65" y1="248.00" x2="-18638.60" y2="686.00"/>
<line x1="-900.70" y1="248.00" x2="-18119.36" y2="686.00"/>
<line x1="-859.75" y1="248.00" x2="-17600.11" y2="686.00"/>
<line x1="-818.80" y1="248.00" x2="-17080.86" y2="686.00"/>
<line x1="-777.85" y1="248.00" x2="-16561.62" y2="686.00"/>
<line x1="-736.90" y1="248.00" x2="-16042.37" y2="686.00"/>
<line x1="-695.95" y1="248.00" x2="-15523.13" y2="686.00"/>
<line x1="-655.00" y1="248.00" x2="-15003.88" y2="686.00"/>
<line x1="-614.05" y1="248.00" x2="-14484.63" y2="686.00"/>
<line x1="-573.10" y1="248.00" x2="-13965.39" y2="686.00"/>
<line x1="-532.15" y1="248.00" x2="-13446.14" y2="686.00"/>
<line x1="-491.20" y1="248.00" x2="-12926.90" y2="686.00"/>
<line x1="-450.25" y1="248.00" x2="-12407.65" y2="686.00"/>
<line x1="-409.30" y1="248.00" x2="-11888.40" y2="686.00"/>
<line x1="-368.35" y1="248.00" x2="-11369.16" y2="686.00"/>
<line x1="-327.40" y1="248.00" x2="-10849.91" y2="686.00"/>
<line x1="-286.45" y1="248.00" x2="-10330.67" y2="686.00"/>
<line x1="-245.50" y1="248.00" x2="-9811.42" y2="686.00"/>
<line x1="-204.55" y1="248.00" x2="-9292.17" y2="686.00"/>
<line x1="-163.60" y1="248.00" x2="-8772.93" y2="686.00"/>
<line x1="-122.65" y1="248.00" x2="-8253.68" y2="686.00"/>
<line x1="-81.70" y1="248.00" x2="-7734.44" y2="686.00"/>
<line x1="-40.75" y1="248.00" x2="-7215.19" y2="686.00"/>
<line x1="0.20" y1="248.00" x2="-6695.94" y2="686.00"/>
<line x1="41.15" y1="248.00" x2="-6176.70" y2="686.00"/>
<line x1="82.10" y1="248.00" x2="-5657.45" y2="686.00"/>
<line x1="123.05" y1="248.00" x2="-5138.21" y2="686.00"/>
<line x1="164.00" y1="248.00" x2="-4618.96" y2="686.00"/>
<line x1="204.95" y1="248.00" x2="-4099.71" y2="686.00"/>
<line x1="245.90" y1="248.00" x2="-3580.47" y2="686.00"/>
<line x1="286.85" y1="248.00" x2="-3061.22" y2="686.00"/>
<line x1="327.80" y1="248.00" x2="-2541.98" y2="686.00"/>
<line x1="368.75" y1="248.00" x2="-2022.73" y2="686.00"/>
<line x1="409.70" y1="248.00" x2="-1503.48" y2="686.00"/>
<line x1="450.65" y1="248.00" x2="-984.24" y2="686.00"/>
<line x1="491.60" y1="248.00" x2="-464.99" y2="686.00"/>
<line x1="532.55" y1="248.00" x2="54.25" y2="686.00"/>
<line x1="614.45" y1="248.00" x2="1092.75" y2="686.00"/>
<line x1="655.40" y1="248.00" x2="1611.99" y2="686.00"/>
<line x1="696.35" y1="248.00" x2="2131.24" y2="686.00"/>
<line x1="737.30" y1="248.00" x2="2650.48" y2="686.00"/>
<line x1="778.25" y1="248.00" x2="3169.73" y2="686.00"/>
<line x1="819.20" y1="248.00" x2="3688.98" y2="686.00"/>
<line x1="860.15" y1="248.00" x2="4208.22" y2="686.00"/>
<line x1="901.10" y1="248.00" x2="4727.47" y2="686.00"/>
<line x1="942.05" y1="248.00" x2="5246.71" y2="686.00"/>
<line x1="983.00" y1="248.00" x2="5765.96" y2="686.00"/>
<line x1="1023.95" y1="248.00" x2="6285.21" y2="686.00"/>
<line x1="1064.90" y1="248.00" x2="6804.45" y2="686.00"/>
<line x1="1105.85" y1="248.00" x2="7323.70" y2="686.00"/>
<line x1="1146.80" y1="248.00" x2="7842.94" y2="686.00"/>
<line x1="1187.75" y1="248.00" x2="8362.19" y2="686.00"/>
<line x1="1228.70" y1="248.00" x2="8881.44" y2="686.00"/>
<line x1="1269.65" y1="248.00" x2="9400.68" y2="686.00"/>
<line x1="1310.60" y1="248.00" x2="9919.93" y2="686.00"/>
<line x1="1351.55" y1="248.00" x2="10439.17" y2="686.00"/>
<line x1="1392.50" y1="248.00" x2="10958.42" y2="686.00"/>
<line x1="1433.45" y1="248.00" x2="11477.67" y2="686.00"/>
<line x1="1474.40" y1="248.00" x2="11996.91" y2="686.00"/>
<line x1="1515.35" y1="248.00" x2="12516.16" y2="686.00"/>
<line x1="1556.30" y1="248.00" x2="13035.40" y2="686.00"/>
<line x1="1597.25" y1="248.00" x2="13554.65" y2="686.00"/>
<line x1="1638.20" y1="248.00" x2="14073.90" y2="686.00"/>
<line x1="1679.15" y1="248.00" x2="14593.14" y2="686.00"/>
<line x1="1720.10" y1="248.00" x2="15112.39" y2="686.00"/>
<line x1="1761.05" y1="248.00" x2="15631.63" y2="686.00"/>
<line x1="1802.00" y1="248.00" x2="16150.88" y2="686.00"/>
<line x1="1842.95" y1="248.00" x2="16670.13" y2="686.00"/>
<line x1="1883.90" y1="248.00" x2="17189.37" y2="686.00"/>
<line x1="1924.85" y1="248.00" x2="17708.62" y2="686.00"/>
<line x1="1965.80" y1="248.00" x2="18227.86" y2="686.00"/>
<line x1="2006.75" y1="248.00" x2="18747.11" y2="686.00"/>
<line x1="2047.70" y1="248.00" x2="19266.36" y2="686.00"/>
<line x1="2088.65" y1="248.00" x2="19785.60" y2="686.00"/>
<line x1="2129.60" y1="248.00" x2="20304.85" y2="686.00"/>
<line x1="2170.55" y1="248.00" x2="20824.09" y2="686.00"/>
<line x1="2211.50" y1="248.00" x2="21343.34" y2="686.00"/>
</g>
<polygon points="0,379.5 1160,383.5 1160,387 0,383" fill="#ff0000"/>
<polygon points="570,217 572,217 603,686 552,686" fill="#00ff00"/>
</svg></div>
<div class="a" style="left:408px;top:776px;width:1160px;height:2px;background:#33373b;"></div>
<div class="a" style="left:408px;top:778px;width:1160px;height:22px;background:#16191c;"></div>
<div class="a" style="left:408px;top:800px;width:1160px;height:1px;background:#222a36;"></div>
<svg class="a" style="left:413px;top:783px" width="15" height="15" viewBox="0 0 15 15"><rect x="3" y="1.3" width="9" height="3.4" rx="0.8" fill="#000"/><rect x="3.8" y="2" width="7.4" height="2" fill="#fff"/><path d="M3.3,6 L11.7,6 L7.5,11.6 Z" fill="#eef2ff" stroke="#000" stroke-width="0.9" stroke-linejoin="round"/></svg>
<div class="a" style="left:435px;top:779px;width:136px;height:22px;background:#262d37;border-radius:3px 3px 0 0"></div>
<div class="t" style="left:439.2px;top:785px;">Logging/Console</div>
<svg class="a" style="left:1551px;top:785px" width="10" height="10" viewBox="0 0 10 10"><path d="M1,1 L9,9 M9,1 L1,9" stroke="#fff" stroke-width="1.3"/></svg>
<div class="btn" style="left:423px;top:816px;width:26px;height:26px;background:#2a5aa8"></div>
<svg class="a" style="left:428px;top:821px" width="16" height="16" viewBox="0 0 16 16"><polygon points="14.84,10.83 10.83,14.84 5.17,14.84 1.16,10.83 1.16,5.17 5.17,1.16 10.83,1.16 14.84,5.17" fill="#5a0a10"/><polygon points="14.01,10.49 10.49,14.01 5.51,14.01 1.99,10.49 1.99,5.51 5.51,1.99 10.49,1.99 14.01,5.51" fill="#fff"/><polygon points="12.80,9.99 9.99,12.80 6.01,12.80 3.20,9.99 3.20,6.01 6.01,3.20 9.99,3.20 12.80,6.01" fill="#d81818"/><path d="M5.2,5.2 L10.8,10.8 M10.8,5.2 L5.2,10.8" stroke="#fff" stroke-width="1.2"/></svg>
<div class="btn" style="left:461px;top:816px;width:26px;height:26px;background:#2a5aa8"></div>
<svg class="a" style="left:466px;top:821px" width="16" height="16" viewBox="0 0 16 16"><rect x="1.5" y="1.3" width="13" height="13.5" fill="#f0f0ec" stroke="#000" stroke-width="1.1"/><rect x="2.2" y="6" width="11.6" height="3.5" fill="#c8c8c4"/><path d="M3,4.5 L13.5,4.5 M3,10.5 L13,10.5" stroke="#2a5ab0" stroke-width="1.1"/><rect x="9.2" y="2.6" width="2.6" height="4.2" rx="0.6" fill="#2a5ab0"/><rect x="5" y="8.6" width="2.6" height="4.2" rx="0.6" fill="#2a5ab0"/></svg>
<div class="btn" style="left:499px;top:816px;width:180px;height:23px;background:#2c2f33"></div>
<div class="t" style="left:686.2px;top:823px;">Filter</div>
<div class="a" style="left:415px;top:850px;width:1146px;height:1px;background:#33363b;"></div>
<div class="a" style="left:415px;top:859px;width:1120px;height:98px;overflow:hidden">
<svg class="a" style="left:8.199999999999989px;top:-4px" width="14" height="14" viewBox="-1 -0.5 14 14"><circle cx="7" cy="6.2" r="6.9" fill="#050805"/><path d="M7,6.2 L7.00,0.20 A6,6 0 0 1 12.20,9.20 Z" fill="#22dc0a"/><path d="M7,6.2 L12.20,9.20 A6,6 0 0 1 1.80,9.20 Z" fill="#14a014"/><path d="M7,6.2 L1.80,9.20 A6,6 0 0 1 7.00,0.20 Z" fill="#66e266"/><circle cx="7" cy="6.2" r="5.6" fill="none" stroke="#8cf08c" stroke-width="0.7" opacity="0.7"/></svg>
<div class="t" style="left:28.19999999999999px;top:-3px">[ThreadJobLoadImage] Callback END</div>
<svg class="a" style="left:8.199999999999989px;top:13px" width="14" height="14" viewBox="-1 -0.5 14 14"><circle cx="7" cy="6.2" r="6.9" fill="#050805"/><path d="M7,6.2 L7.00,0.20 A6,6 0 0 1 12.20,9.20 Z" fill="#22dc0a"/><path d="M7,6.2 L12.20,9.20 A6,6 0 0 1 1.80,9.20 Z" fill="#14a014"/><path d="M7,6.2 L1.80,9.20 A6,6 0 0 1 7.00,0.20 Z" fill="#66e266"/><circle cx="7" cy="6.2" r="5.6" fill="none" stroke="#8cf08c" stroke-width="0.7" opacity="0.7"/></svg>
<div class="t" style="left:28.19999999999999px;top:14px">[Profiler] Adding image '../assets/images/splash.png'</div>
<svg class="a" style="left:8.199999999999989px;top:30px" width="14" height="14" viewBox="-1 -0.5 14 14"><circle cx="7" cy="6.2" r="6.9" fill="#050805"/><path d="M7,6.2 L7.00,0.20 A6,6 0 0 1 12.20,9.20 Z" fill="#22dc0a"/><path d="M7,6.2 L12.20,9.20 A6,6 0 0 1 1.80,9.20 Z" fill="#14a014"/><path d="M7,6.2 L1.80,9.20 A6,6 0 0 1 7.00,0.20 Z" fill="#66e266"/><circle cx="7" cy="6.2" r="5.6" fill="none" stroke="#8cf08c" stroke-width="0.7" opacity="0.7"/></svg>
<div class="t" style="left:28.19999999999999px;top:31px">[ThreadJobLoadImage] Callback END</div>
<svg class="a" style="left:8.199999999999989px;top:47px" width="14" height="14" viewBox="-1 -0.5 14 14"><circle cx="7" cy="6.2" r="6.9" fill="#050805"/><path d="M7,6.2 L7.00,0.20 A6,6 0 0 1 12.20,9.20 Z" fill="#22dc0a"/><path d="M7,6.2 L12.20,9.20 A6,6 0 0 1 1.80,9.20 Z" fill="#14a014"/><path d="M7,6.2 L1.80,9.20 A6,6 0 0 1 7.00,0.20 Z" fill="#66e266"/><circle cx="7" cy="6.2" r="5.6" fill="none" stroke="#8cf08c" stroke-width="0.7" opacity="0.7"/></svg>
<div class="t" style="left:28.19999999999999px;top:48px">[ThreadJobReadFileScene] Callback END</div>
<svg class="a" style="left:8.199999999999989px;top:64px" width="14" height="14" viewBox="-1 -0.5 14 14"><circle cx="7" cy="6.2" r="6.9" fill="#050805"/><path d="M7,6.2 L7.00,0.20 A6,6 0 0 1 12.20,9.20 Z" fill="#22dc0a"/><path d="M7,6.2 L12.20,9.20 A6,6 0 0 1 1.80,9.20 Z" fill="#14a014"/><path d="M7,6.2 L1.80,9.20 A6,6 0 0 1 7.00,0.20 Z" fill="#66e266"/><circle cx="7" cy="6.2" r="5.6" fill="none" stroke="#8cf08c" stroke-width="0.7" opacity="0.7"/></svg>
<div class="t" style="left:28.19999999999999px;top:65px">[Profiler] Adding image '../assets/images/noiseCloud.png'</div>
<svg class="a" style="left:8.199999999999989px;top:81px" width="14" height="14" viewBox="-1 -0.5 14 14"><circle cx="7" cy="6.2" r="6.9" fill="#050805"/><path d="M7,6.2 L7.00,0.20 A6,6 0 0 1 12.20,9.20 Z" fill="#22dc0a"/><path d="M7,6.2 L12.20,9.20 A6,6 0 0 1 1.80,9.20 Z" fill="#14a014"/><path d="M7,6.2 L1.80,9.20 A6,6 0 0 1 7.00,0.20 Z" fill="#66e266"/><circle cx="7" cy="6.2" r="5.6" fill="none" stroke="#8cf08c" stroke-width="0.7" opacity="0.7"/></svg>
<div class="t" style="left:28.19999999999999px;top:82px">[ThreadJobLoadImage] Callback END</div>
</div>
<div class="a" style="left:1538px;top:858px;width:16px;height:95px;background:#1c1f22;"></div>
<div class="a" style="left:1541px;top:947px;width:11px;height:5px;background:#4a4d52;border-radius:2px"></div>
<div class="a" style="left:415px;top:963px;width:1146px;height:1px;background:#33363b;"></div>
<div class="btn" style="left:423px;top:971px;width:753px;height:23px;background:#2c2f33"></div>
<div class="t" style="left:1185.2px;top:978px;">Input</div>
<div class="a" style="left:1568px;top:23px;width:2px;height:986px;background:#33373b;"></div>
<div class="a" style="left:1570px;top:23px;width:350px;height:22px;background:#16191c;"></div>
<div class="a" style="left:1570px;top:45px;width:350px;height:1px;background:#222a36;"></div>
<svg class="a" style="left:1575px;top:28px" width="15" height="15" viewBox="0 0 15 15"><rect x="3" y="1.3" width="9" height="3.4" rx="0.8" fill="#000"/><rect x="3.8" y="2" width="7.4" height="2" fill="#fff"/><path d="M3.3,6 L11.7,6 L7.5,11.6 Z" fill="#eef2ff" stroke="#000" stroke-width="0.9" stroke-linejoin="round"/></svg>
<div class="a" style="left:1597px;top:24px;width:122px;height:22px;background:#262d37;border-radius:3px 3px 0 0"></div>
<div class="a" style="left:1727px;top:24px;width:87px;height:21px;background:#1c2026;border-radius:3px 3px 0 0"></div>
<div class="t" style="left:1601.2px;top:29px;">Project setup</div>
<div class="t" style="left:1731.2px;top:29px;">Projects</div>
<svg class="a" style="left:1902px;top:30px" width="10" height="10" viewBox="0 0 10 10"><path d="M1,1 L9,9 M9,1 L1,9" stroke="#fff" stroke-width="1.3"/></svg>
<div class="btn" style="left:1585px;top:61px;width:227px;height:23px;background:#2c2f33"></div>
<div class="a" style="left:1585px;top:61px;width:227px;height:23px;overflow:hidden">
<div class="t" style="left:4.2px;top:6px">Brakeza3D - By Eduardo Rodriguez</div>
</div>
<div class="a" style="left:1577px;top:92px;width:336px;height:1px;background:#33363b;"></div>
<svg class="a" style="left:1586px;top:101px" width="15" height="15" viewBox="0 0 16 16"><circle cx="8" cy="8" r="7" fill="#4a80d0" stroke="#203a70" stroke-width="0.6"/><path d="M3,4 C5,3 7,4 6,7 C5,9 3,8 2,10 C1,7 2,5 3,4 Z" fill="#6ab050"/><path d="M9,9 C11,8 13,9 13,11 C12,13 10,14 9,13 Z" fill="#e8f0ff"/><path d="M9,2 C11,2 13,3 14,5 C12,5 10,4 9,2 Z" fill="#e8f0ff"/></svg>
<svg class="a" style="left:1620px;top:107px" width="7" height="8"><path d="M0.5,0.5 L6.5,4 L0.5,7.5 Z" fill="#fff"/></svg>
<div class="t" style="left:1633.2px;top:106px;">Project scripts (0)</div>
<svg class="a" style="left:1586px;top:128px" width="15" height="15" viewBox="0 0 16 16"><polygon points="15.00,4.00 13.29,4.95 13.83,6.83 11.95,6.29 11.00,8.00 10.05,6.29 8.17,6.83 8.71,4.95 7.00,4.00 8.71,3.05 8.17,1.17 10.05,1.71 11.00,0.00 11.95,1.71 13.83,1.17 13.29,3.05" fill="#eee" stroke="#333" stroke-width="0.5"/><circle cx="11" cy="4" r="1.20" fill="#222"/><polygon points="8.30,11.50 6.68,12.40 7.19,14.19 5.40,13.68 4.50,15.30 3.60,13.68 1.81,14.19 2.32,12.40 0.70,11.50 2.32,10.60 1.81,8.81 3.60,9.32 4.50,7.70 5.40,9.32 7.19,8.81 6.68,10.60" fill="#eee" stroke="#333" stroke-width="0.5"/><circle cx="4.5" cy="11.5" r="1.14" fill="#222"/><path d="M7.5,7 L8.5,8" stroke="#aaa" stroke-width="1"/></svg>
<svg class="a" style="left:1620px;top:134px" width="7" height="8"><path d="M0.5,0.5 L6.5,4 L0.5,7.5 Z" fill="#fff"/></svg>
<div class="t" style="left:1633.2px;top:133px;">Scene scripts (0)</div>
<svg class="a" style="left:1586px;top:155px" width="15" height="15" viewBox="0 0 16 16"><path d="M1,3 L8,1 L15,3 L15,13 L8,15 L1,13 Z" fill="#303030"/><g stroke-width="1.1"><path d="M2,4 L2,13" stroke="#a060c0"/><path d="M4,4 L4,14" stroke="#60c0a0"/><path d="M6,3 L6,14" stroke="#c0c060"/><path d="M8,3 L8,15" stroke="#60a0e0"/><path d="M10,3 L10,14" stroke="#80e080"/><path d="M12,4 L12,14" stroke="#e08080"/><path d="M14,4 L14,13" stroke="#60c0c0"/></g></svg>
<svg class="a" style="left:1620px;top:161px" width="7" height="8"><path d="M0.5,0.5 L6.5,4 L0.5,7.5 Z" fill="#fff"/></svg>
<div class="t" style="left:1633.2px;top:160px;">Scene shaders (0)</div>
<div class="a" style="left:1570px;top:477px;width:350px;height:2px;background:#33373b;"></div>
<div class="a" style="left:1570px;top:479px;width:350px;height:22px;background:#16191c;"></div>
<div class="a" style="left:1570px;top:501px;width:350px;height:1px;background:#222a36;"></div>
<svg class="a" style="left:1575px;top:484px" width="15" height="15" viewBox="0 0 15 15"><rect x="3" y="1.3" width="9" height="3.4" rx="0.8" fill="#000"/><rect x="3.8" y="2" width="7.4" height="2" fill="#fff"/><path d="M3.3,6 L11.7,6 L7.5,11.6 Z" fill="#eef2ff" stroke="#000" stroke-width="0.9" stroke-linejoin="round"/></svg>
<div class="a" style="left:1597px;top:480px;width:73px;height:22px;background:#262d37;border-radius:3px 3px 0 0"></div>
<div class="a" style="left:1678px;top:480px;width:80px;height:21px;background:#1c2026;border-radius:3px 3px 0 0"></div>
<div class="a" style="left:1766px;top:480px;width:79px;height:21px;background:#1c2026;border-radius:3px 3px 0 0"></div>
<div class="t" style="left:1601.2px;top:485px;">Scenes</div>
<div class="t" style="left:1682.2px;top:485px;">Scripts</div>
<div class="t" style="left:1770.2px;top:485px;">Shaders</div>
<svg class="a" style="left:1902px;top:486px" width="10" height="10" viewBox="0 0 10 10"><path d="M1,1 L9,9 M9,1 L1,9" stroke="#fff" stroke-width="1.3"/></svg>
<svg class="a" style="left:1580px;top:512px" width="44" height="44" viewBox="0 0 44 44"><g stroke="#000" stroke-width="2.2" fill="#23272b"><circle cx="13.3" cy="16.8" r="6.6"/><circle cx="26.4" cy="15.6" r="7.4"/></g><circle cx="13.3" cy="16.8" r="5.5" fill="#23272b"/><circle cx="26.4" cy="15.6" r="6.3" fill="#23272b"/><g fill="none" stroke="#c8c8c8" stroke-width="1.3"><path d="M9,21.5 C6.5,17 8.5,11.5 14,11.5 C16.5,11.5 18,12.5 19,14"/><path d="M20,13.5 C21,10 24,9 27,9.3 C30,9.6 32,11.5 32.8,14.5"/><path d="M12.3,19.5 C11.3,17.8 12.3,16 14.8,16.2"/><path d="M23.5,18 C23,15.5 24.5,13.5 27.5,14"/></g><rect x="17" y="21" width="8" height="2.2" fill="#9a9a9a"/><path d="M10.8,28.2 L16,28.2 L16,31.8 L10.8,31.8 Z" fill="#e0e0e0" stroke="#000" stroke-width="1"/><rect x="15.5" y="25.3" width="9.5" height="9.8" fill="#c0c0c0" stroke="#000" stroke-width="1.2"/><rect x="17.3" y="27.3" width="3.5" height="6" fill="#7a7a7a"/><rect x="20.8" y="27.3" width="2.5" height="6" fill="#a8a8a8"/><path d="M25,29 L33.5,27 L35,26.5 L35,35.5 L33.5,35 L25,33 Z" fill="#e4e4e4" stroke="#000" stroke-width="1.1" stroke-linejoin="round"/></svg>
<div class="t" style="left:1628.2px;top:521px;">Current: ../assets/scenes/</div>
<div class="btn" style="left:1879px;top:519px;width:26px;height:26px;background:#323539"></div>
<svg class="a" style="left:1884px;top:524px" width="16" height="16" viewBox="0 0 16 16"><path d="M2.5,4.5 L9,4.5 L12,7.5 L12,15 L2.5,15 Z" fill="#f4f4f4" stroke="#222" stroke-width="0.6"/><circle cx="11.5" cy="4.5" r="3.5" fill="#e8b818" stroke="#705000" stroke-width="0.5"/><path d="M11.5,2.3 L11.5,6.7 M9.3,4.5 L13.7,4.5" stroke="#fff" stroke-width="1.1"/></svg>
<div class="a" style="left:1577px;top:561px;width:336px;height:1px;background:#33363b;"></div>
<svg class="a" style="left:1586px;top:574px" width="15" height="14" viewBox="0 0 16 16"><path d="M0.5,2 L6,2 L7.5,4 L15.5,4 L15.5,14 L0.5,14 Z" fill="#c8b880" stroke="#6a5a30" stroke-width="0.6"/><path d="M2.5,6.5 L15.5,6.5 L15.5,14 L0.5,14 L0.5,8 Z" fill="#e8dca8" stroke="#6a5a30" stroke-width="0.6"/></svg>
<div class="btn" style="left:1613px;top:569px;width:66px;height:23px;background:#2c3a4a"></div>
<div class="t" style="left:1617.2px;top:576px;">Examples</div>
<div class="a" style="left:1577px;top:600px;width:336px;height:1px;background:#33363b;"></div>
<svg class="a" style="left:1587px;top:612.5px" width="22" height="22" viewBox="0 0 44 44"><g stroke="#000" stroke-width="2.2" fill="#23272b"><circle cx="13.3" cy="16.8" r="6.6"/><circle cx="26.4" cy="15.6" r="7.4"/></g><circle cx="13.3" cy="16.8" r="5.5" fill="#23272b"/><circle cx="26.4" cy="15.6" r="6.3" fill="#23272b"/><g fill="none" stroke="#c8c8c8" stroke-width="1.3"><path d="M9,21.5 C6.5,17 8.5,11.5 14,11.5 C16.5,11.5 18,12.5 19,14"/><path d="M20,13.5 C21,10 24,9 27,9.3 C30,9.6 32,11.5 32.8,14.5"/><path d="M12.3,19.5 C11.3,17.8 12.3,16 14.8,16.2"/><path d="M23.5,18 C23,15.5 24.5,13.5 27.5,14"/></g><rect x="17" y="21" width="8" height="2.2" fill="#9a9a9a"/><path d="M10.8,28.2 L16,28.2 L16,31.8 L10.8,31.8 Z" fill="#e0e0e0" stroke="#000" stroke-width="1"/><rect x="15.5" y="25.3" width="9.5" height="9.8" fill="#c0c0c0" stroke="#000" stroke-width="1.2"/><rect x="17.3" y="27.3" width="3.5" height="6" fill="#7a7a7a"/><rect x="20.8" y="27.3" width="2.5" height="6" fill="#a8a8a8"/><path d="M25,29 L33.5,27 L35,26.5 L35,35.5 L33.5,35 L25,33 Z" fill="#e4e4e4" stroke="#000" stroke-width="1.1" stroke-linejoin="round"/></svg>
<div class="a" style="left:1616px;top:616px;width:158px;height:16px;overflow:hidden"><div class="t" style="left:-0.3px;top:0">1) DemoScene.json</div></div>
<svg class="a" style="left:1784px;top:617px" width="13" height="9" viewBox="0 2 16 11"><path d="M0.5,8 C3,3 13,3 15.5,8 C13,13 3,13 0.5,8 Z" fill="#c8c8c8" stroke="#111" stroke-width="0.6"/><circle cx="8" cy="7.6" r="3" fill="#444"/><circle cx="7" cy="6.6" r="1" fill="#fff"/></svg>
<svg class="a" style="left:1816px;top:616px" width="16" height="13" viewBox="0 1 16 14"><path d="M6,1.5 L15,1.5 L15.5,2 L15.5,14.5 L6,14.5 Z" fill="#f0f0f0" stroke="#000" stroke-width="0.9"/><path d="M0.8,8 L5.5,3.3 L5.5,6 L11,6 L11,10 L5.5,10 L5.5,12.7 Z" fill="#fff" stroke="#000" stroke-width="0.9"/><rect x="9" y="12" width="2.5" height="1.2" fill="#d03030"/></svg>
<div class="btn" style="left:1845px;top:610px;width:26px;height:26px;background:#2c3440"></div>
<svg class="a" style="left:1850px;top:617px" width="17" height="13" viewBox="0 2 16 13"><path d="M0.5,8.5 L6,3.5 L15.5,8 L10,13 Z" fill="#a8a8a8" stroke="#222" stroke-width="0.7"/><path d="M0.5,8.5 L0.5,10.5 L10,15 L15.5,10 L15.5,8 L10,13 Z" fill="#606060" stroke="#222" stroke-width="0.7"/><path d="M2,8.5 L6.2,4.6 L14,8.2" fill="none" stroke="#d8d8d8" stroke-width="0.8"/><circle cx="13" cy="10.5" r="0.8" fill="#4f4"/></svg>
<div class="btn" style="left:1879px;top:610px;width:26px;height:26px;background:#2c3440"></div>
<svg class="a" style="left:1884px;top:614px" width="16" height="16" viewBox="0 0 16 16"><polygon points="14.84,10.83 10.83,14.84 5.17,14.84 1.16,10.83 1.16,5.17 5.17,1.16 10.83,1.16 14.84,5.17" fill="#5a0a10"/><polygon points="14.01,10.49 10.49,14.01 5.51,14.01 1.99,10.49 1.99,5.51 5.51,1.99 10.49,1.99 14.01,5.51" fill="#fff"/><polygon points="12.80,9.99 9.99,12.80 6.01,12.80 3.20,9.99 3.20,6.01 6.01,3.20 9.99,3.20 12.80,6.01" fill="#d81818"/><path d="M5.2,5.2 L10.8,10.8 M10.8,5.2 L5.2,10.8" stroke="#fff" stroke-width="1.2"/></svg>
<div class="a" style="left:1585px;top:638px;width:320px;height:30px;background:#2a2d31;"></div>
<svg class="a" style="left:1587px;top:642.5px" width="22" height="22" viewBox="0 0 44 44"><g stroke="#000" stroke-width="2.2" fill="#23272b"><circle cx="13.3" cy="16.8" r="6.6"/><circle cx="26.4" cy="15.6" r="7.4"/></g><circle cx="13.3" cy="16.8" r="5.5" fill="#23272b"/><circle cx="26.4" cy="15.6" r="6.3" fill="#23272b"/><g fill="none" stroke="#c8c8c8" stroke-width="1.3"><path d="M9,21.5 C6.5,17 8.5,11.5 14,11.5 C16.5,11.5 18,12.5 19,14"/><path d="M20,13.5 C21,10 24,9 27,9.3 C30,9.6 32,11.5 32.8,14.5"/><path d="M12.3,19.5 C11.3,17.8 12.3,16 14.8,16.2"/><path d="M23.5,18 C23,15.5 24.5,13.5 27.5,14"/></g><rect x="17" y="21" width="8" height="2.2" fill="#9a9a9a"/><path d="M10.8,28.2 L16,28.2 L16,31.8 L10.8,31.8 Z" fill="#e0e0e0" stroke="#000" stroke-width="1"/><rect x="15.5" y="25.3" width="9.5" height="9.8" fill="#c0c0c0" stroke="#000" stroke-width="1.2"/><rect x="17.3" y="27.3" width="3.5" height="6" fill="#7a7a7a"/><rect x="20.8" y="27.3" width="2.5" height="6" fill="#a8a8a8"/><path d="M25,29 L33.5,27 L35,26.5 L35,35.5 L33.5,35 L25,33 Z" fill="#e4e4e4" stroke="#000" stroke-width="1.1" stroke-linejoin="round"/></svg>
<div class="a" style="left:1616px;top:646px;width:158px;height:16px;overflow:hidden"><div class="t" style="left:-0.3px;top:0">2) PerformanceTestScene.json</div></div>
<svg class="a" style="left:1784px;top:647px" width="13" height="9" viewBox="0 2 16 11"><path d="M0.5,8 C3,3 13,3 15.5,8 C13,13 3,13 0.5,8 Z" fill="#c8c8c8" stroke="#111" stroke-width="0.6"/><circle cx="8" cy="7.6" r="3" fill="#444"/><circle cx="7" cy="6.6" r="1" fill="#fff"/></svg>
<svg class="a" style="left:1816px;top:646px" width="16" height="13" viewBox="0 1 16 14"><path d="M6,1.5 L15,1.5 L15.5,2 L15.5,14.5 L6,14.5 Z" fill="#f0f0f0" stroke="#000" stroke-width="0.9"/><path d="M0.8,8 L5.5,3.3 L5.5,6 L11,6 L11,10 L5.5,10 L5.5,12.7 Z" fill="#fff" stroke="#000" stroke-width="0.9"/><rect x="9" y="12" width="2.5" height="1.2" fill="#d03030"/></svg>
<div class="btn" style="left:1845px;top:640px;width:26px;height:26px;background:#2c3440"></div>
<svg class="a" style="left:1850px;top:647px" width="17" height="13" viewBox="0 2 16 13"><path d="M0.5,8.5 L6,3.5 L15.5,8 L10,13 Z" fill="#a8a8a8" stroke="#222" stroke-width="0.7"/><path d="M0.5,8.5 L0.5,10.5 L10,15 L15.5,10 L15.5,8 L10,13 Z" fill="#606060" stroke="#222" stroke-width="0.7"/><path d="M2,8.5 L6.2,4.6 L14,8.2" fill="none" stroke="#d8d8d8" stroke-width="0.8"/><circle cx="13" cy="10.5" r="0.8" fill="#4f4"/></svg>
<div class="btn" style="left:1879px;top:640px;width:26px;height:26px;background:#2c3440"></div>
<svg class="a" style="left:1884px;top:644px" width="16" height="16" viewBox="0 0 16 16"><polygon points="14.84,10.83 10.83,14.84 5.17,14.84 1.16,10.83 1.16,5.17 5.17,1.16 10.83,1.16 14.84,5.17" fill="#5a0a10"/><polygon points="14.01,10.49 10.49,14.01 5.51,14.01 1.99,10.49 1.99,5.51 5.51,1.99 10.49,1.99 14.01,5.51" fill="#fff"/><polygon points="12.80,9.99 9.99,12.80 6.01,12.80 3.20,9.99 3.20,6.01 6.01,3.20 9.99,3.20 12.80,6.01" fill="#d81818"/><path d="M5.2,5.2 L10.8,10.8 M10.8,5.2 L5.2,10.8" stroke="#fff" stroke-width="1.2"/></svg>
<svg class="a" style="left:1587px;top:672.5px" width="22" height="22" viewBox="0 0 44 44"><g stroke="#000" stroke-width="2.2" fill="#23272b"><circle cx="13.3" cy="16.8" r="6.6"/><circle cx="26.4" cy="15.6" r="7.4"/></g><circle cx="13.3" cy="16.8" r="5.5" fill="#23272b"/><circle cx="26.4" cy="15.6" r="6.3" fill="#23272b"/><g fill="none" stroke="#c8c8c8" stroke-width="1.3"><path d="M9,21.5 C6.5,17 8.5,11.5 14,11.5 C16.5,11.5 18,12.5 19,14"/><path d="M20,13.5 C21,10 24,9 27,9.3 C30,9.6 32,11.5 32.8,14.5"/><path d="M12.3,19.5 C11.3,17.8 12.3,16 14.8,16.2"/><path d="M23.5,18 C23,15.5 24.5,13.5 27.5,14"/></g><rect x="17" y="21" width="8" height="2.2" fill="#9a9a9a"/><path d="M10.8,28.2 L16,28.2 L16,31.8 L10.8,31.8 Z" fill="#e0e0e0" stroke="#000" stroke-width="1"/><rect x="15.5" y="25.3" width="9.5" height="9.8" fill="#c0c0c0" stroke="#000" stroke-width="1.2"/><rect x="17.3" y="27.3" width="3.5" height="6" fill="#7a7a7a"/><rect x="20.8" y="27.3" width="2.5" height="6" fill="#a8a8a8"/><path d="M25,29 L33.5,27 L35,26.5 L35,35.5 L33.5,35 L25,33 Z" fill="#e4e4e4" stroke="#000" stroke-width="1.1" stroke-linejoin="round"/></svg>
<div class="a" style="left:1616px;top:676px;width:158px;height:16px;overflow:hidden"><div class="t" style="left:-0.3px;top:0">3) RainCubesScene.json</div></div>
<svg class="a" style="left:1784px;top:677px" width="13" height="9" viewBox="0 2 16 11"><path d="M0.5,8 C3,3 13,3 15.5,8 C13,13 3,13 0.5,8 Z" fill="#c8c8c8" stroke="#111" stroke-width="0.6"/><circle cx="8" cy="7.6" r="3" fill="#444"/><circle cx="7" cy="6.6" r="1" fill="#fff"/></svg>
<svg class="a" style="left:1816px;top:676px" width="16" height="13" viewBox="0 1 16 14"><path d="M6,1.5 L15,1.5 L15.5,2 L15.5,14.5 L6,14.5 Z" fill="#f0f0f0" stroke="#000" stroke-width="0.9"/><path d="M0.8,8 L5.5,3.3 L5.5,6 L11,6 L11,10 L5.5,10 L5.5,12.7 Z" fill="#fff" stroke="#000" stroke-width="0.9"/><rect x="9" y="12" width="2.5" height="1.2" fill="#d03030"/></svg>
<div class="btn" style="left:1845px;top:670px;width:26px;height:26px;background:#2c3440"></div>
<svg class="a" style="left:1850px;top:677px" width="17" height="13" viewBox="0 2 16 13"><path d="M0.5,8.5 L6,3.5 L15.5,8 L10,13 Z" fill="#a8a8a8" stroke="#222" stroke-width="0.7"/><path d="M0.5,8.5 L0.5,10.5 L10,15 L15.5,10 L15.5,8 L10,13 Z" fill="#606060" stroke="#222" stroke-width="0.7"/><path d="M2,8.5 L6.2,4.6 L14,8.2" fill="none" stroke="#d8d8d8" stroke-width="0.8"/><circle cx="13" cy="10.5" r="0.8" fill="#4f4"/></svg>
<div class="btn" style="left:1879px;top:670px;width:26px;height:26px;background:#2c3440"></div>
<svg class="a" style="left:1884px;top:674px" width="16" height="16" viewBox="0 0 16 16"><polygon points="14.84,10.83 10.83,14.84 5.17,14.84 1.16,10.83 1.16,5.17 5.17,1.16 10.83,1.16 14.84,5.17" fill="#5a0a10"/><polygon points="14.01,10.49 10.49,14.01 5.51,14.01 1.99,10.49 1.99,5.51 5.51,1.99 10.49,1.99 14.01,5.51" fill="#fff"/><polygon points="12.80,9.99 9.99,12.80 6.01,12.80 3.20,9.99 3.20,6.01 6.01,3.20 9.99,3.20 12.80,6.01" fill="#d81818"/><path d="M5.2,5.2 L10.8,10.8 M10.8,5.2 L5.2,10.8" stroke="#fff" stroke-width="1.2"/></svg>
<svg class="a" style="left:940px;top:801px" width="100" height="208"><polygon points="18.2,0 72.5,0 87,208 11,208" fill="rgba(0,255,40,0.018)"/></svg>
<div class="a" style="left:1562px;top:915.5px;font-family:'Liberation Sans',sans-serif;letter-spacing:0;font-size:19.75px;line-height:24px;color:rgba(215,215,215,0.6);white-space:pre">Activar Windows</div>
<div class="a" style="left:1562px;top:940px;font-family:'Liberation Sans',sans-serif;letter-spacing:0;font-size:14.8px;line-height:20px;color:rgba(215,215,215,0.6);white-space:pre">Ve a Configuración para activar Windows.</div>
</body></html>
